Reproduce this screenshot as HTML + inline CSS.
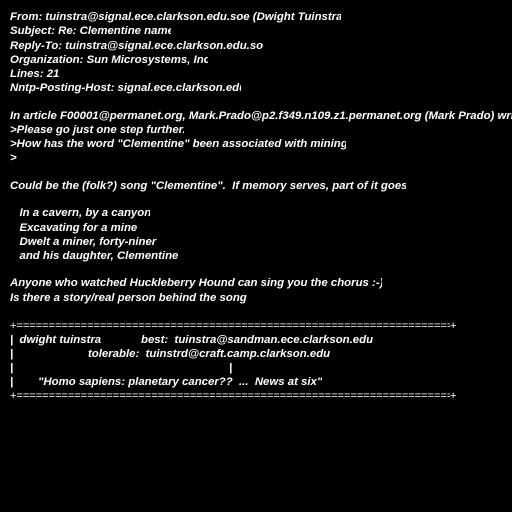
<!DOCTYPE html><html><head><style>
body{margin:0;background:#000;width:512px;height:512px;overflow:hidden;position:relative}
.l{position:absolute;left:10px;color:#fff;font:italic bold 11.4px "Liberation Sans",sans-serif;white-space:pre;overflow:hidden;line-height:14px;margin-top:1px}
.b{font-style:normal;font-weight:normal;font-size:11px}
</style></head><body>
<div class="l" style="top:9px;width:331px">From: tuinstra@signal.ece.clarkson.edu.soe (Dwight Tuinstra)</div>
<div class="l" style="top:23px;width:161px">Subject: Re: Clementine names</div>
<div class="l" style="top:38px;width:253px">Reply-To: tuinstra@signal.ece.clarkson.edu.soe</div>
<div class="l" style="top:52px;width:198px">Organization: Sun Microsystems, Inc.</div>
<div class="l" style="top:66px">Lines: 21</div>
<div class="l" style="top:80px;width:231px">Nntp-Posting-Host: signal.ece.clarkson.edu</div>
<div class="l" style="top:108px;width:502px">In article F00001@permanet.org, Mark.Prado@p2.f349.n109.z1.permanet.org (Mark Prado) writes:</div>
<div class="l" style="top:122px;width:174px">&gt;Please go just one step further.</div>
<div class="l" style="top:136px;width:336px">&gt;How has the word "Clementine" been associated with mining?</div>
<div class="l" style="top:150px">&gt;</div>
<div class="l" style="top:178px;width:396px">Could be the (folk?) song "Clementine".  If memory serves, part of it goes:</div>
<div class="l" style="top:205px;width:140px">   In a cavern, by a canyon</div>
<div class="l" style="top:220px;width:140px">   Excavating for a mine</div>
<div class="l" style="top:234px;width:147px">   Dwelt a miner, forty-niner</div>
<div class="l" style="top:248px;width:169px">   and his daughter, Clementine</div>
<div class="l" style="top:275px;width:372px">Anyone who watched Huckleberry Hound can sing you the chorus :-)</div>
<div class="l" style="top:290px;width:237px">Is there a story/real person behind the song?</div>
<div class="l b" style="top:318px;width:440px">+==================================================================================================</div>
<div class="l b" style="top:318px;left:450px">+</div>
<div class="l" style="top:332px">|  dwight tuinstra</div>
<div class="l" style="top:332px;left:141px">best:  tuinstra@sandman.ece.clarkson.edu</div>
<div class="l" style="top:346px">|</div>
<div class="l" style="top:346px;left:88px">tolerable:  tuinstrd@craft.camp.clarkson.edu</div>
<div class="l" style="top:360px">|</div>
<div class="l" style="top:360px;left:229px">|</div>
<div class="l" style="top:374px">|</div>
<div class="l" style="top:374px;left:38px">"Homo sapiens: planetary cancer??  ...  News at six"</div>
<div class="l b" style="top:388px;width:440px">+==================================================================================================</div>
<div class="l b" style="top:388px;left:450px">+</div>
</body></html>
